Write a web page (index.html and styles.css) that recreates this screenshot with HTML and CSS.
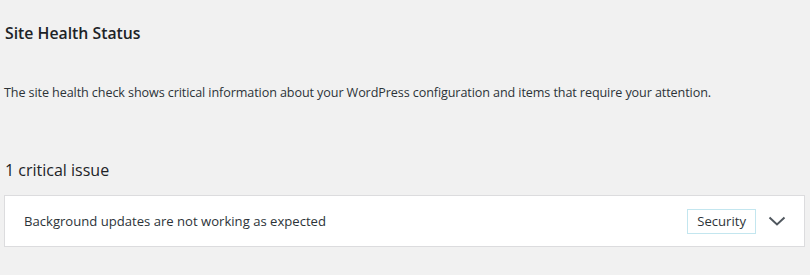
FILE: index.html
```html
<!DOCTYPE html>
<html>
<head>
<meta charset="utf-8">
<link rel="stylesheet" href="styles.css">
</head>
<body>
<div class="page">
  <h1 class="title">Site Health Status</h1>
  <p class="desc">The site health check shows critical information about your WordPress configuration and items that require your attention.</p>
  <h2 class="count">1 critical issue</h2>
  <div class="card">
    <span class="issue">Background updates are not working as expected</span>
    <span class="badge">Security</span>
    <svg class="chev" width="18" height="12" viewBox="0 0 18 12"><path d="M1.5 2.5 L9 9.5 L16.5 2.5" fill="none" stroke="#50575e" stroke-width="2"/></svg>
  </div>
</div>
</body>
</html>
```
FILE: styles.css
```css
html, body { margin: 0; padding: 0; }
body { background: #f1f1f1; font-family: "Open Sans", "Noto Sans", sans-serif; color: #23282d; width: 810px; height: 275px; overflow: hidden; }
.page { padding: 0 5px 0 4px; }
.title { margin: 0; padding: 22px 0 0 1px; font-size: 15.8px; font-weight: 600; line-height: 22px; color: #1d2327; }
.desc { margin: 0; padding: 40px 0 0 0; font-size: 12.6px; line-height: 18px; color: #2c3338; letter-spacing: -0.1px; }
.count { margin: 0; padding: 57px 0 0 1px; font-size: 16px; font-weight: 400; line-height: 22px; color: #1d2327; }
.card { margin-top: 14px; height: 52px; box-sizing: border-box; background: #fff; border: 1px solid #dcdcde; display: flex; align-items: center; padding: 0 18px 0 19px; }
.issue { flex: 1; font-size: 13.1px; color: #2c3338; }
.badge { border: 1px solid #c3e6ef; height: 25px; box-sizing: border-box; padding: 0 9px; display: flex; align-items: center; font-size: 13.1px; color: #2c3338; margin-right: 12px; }
.chev { display: block; }
```
